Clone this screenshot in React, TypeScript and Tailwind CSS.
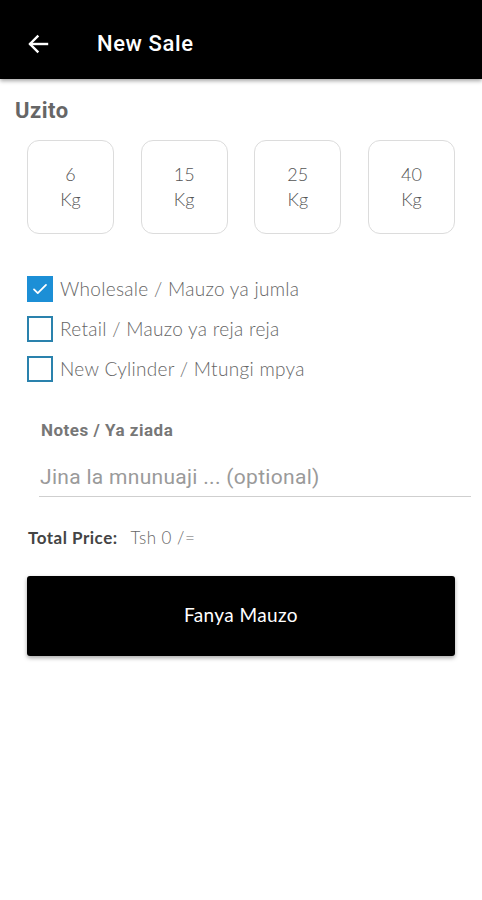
import { useState } from "react"

const weights = ["6", "15", "25", "40"]

const options = [
  { id: 1, label: "Wholesale / Mauzo ya jumla", checked: true },
  { id: 2, label: "Retail / Mauzo ya reja reja", checked: false },
  { id: 3, label: "New Cylinder / Mtungi mpya", checked: false },
]

export default function App() {
  const [checks, setChecks] = useState(options.map((o) => o.checked))

  return (
    <div className="w-[482px] h-[900px] bg-white font-['Roboto',sans-serif]">
      <div className="h-[79px] pt-[8px] bg-black flex items-center shadow-[0_2px_4px_rgba(0,0,0,0.35)] relative">
        <svg className="ml-[26px] w-6 h-6" viewBox="0 0 24 24" fill="none" stroke="white" strokeWidth="2.4" strokeLinecap="square">
          <path d="M21 12H4.5" />
          <path d="M11.5 4.5L4 12l7.5 7.5" />
        </svg>
        <span className="ml-[47px] text-white text-[22px] font-medium tracking-[0.6px]">New Sale</span>
      </div>

      <p className="mt-[20px] ml-[15px] text-[22px] font-bold text-[#666] leading-6 tracking-[0.5px]">Uzito</p>

      <div className="mt-[17px] px-[27px] flex justify-between">
        {weights.map((w) => (
          <button
            key={w}
            className="w-[87px] h-[94px] rounded-[12px] border border-[#dcdcdc] flex flex-col items-center justify-center text-[#555] text-[18px] leading-[25px] font-['Lato',sans-serif] font-light"
          >
            <span>{w}</span>
            <span>Kg</span>
          </button>
        ))}
      </div>

      <div className="mt-[42px] ml-[27px] flex flex-col gap-[14px]">
        {options.map((o, i) => (
          <label key={o.id} className="flex items-center gap-[7px] h-[26px] cursor-pointer">
            <span
              onClick={() => setChecks(checks.map((c, j) => (j === i ? !c : c)))}
              className={
                checks[i]
                  ? "w-[26px] h-[26px] bg-[#1c8fd6] flex items-center justify-center"
                  : "w-[26px] h-[26px] border-2 border-[#2a82ad]"
              }
            >
              {checks[i] && (
                <svg className="w-[18px] h-[18px]" viewBox="0 0 24 24" fill="none" stroke="white" strokeWidth="2.4" strokeLinecap="round" strokeLinejoin="round">
                  <path d="M4 12.5l5 5L20 6.5" />
                </svg>
              )}
            </span>
            <span className="text-[19px] tracking-[0.3px] text-[#666] font-['Lato',sans-serif] font-light">{o.label}</span>
          </label>
        ))}
      </div>

      <div className="mt-[38px] ml-[39px] mr-[11px]">
        <p className="ml-[2px] text-[17px] font-bold text-[#777] leading-5 tracking-[0.5px]">Notes / Ya ziada</p>
        <div className="mt-[25px] border-b border-[#cfcfcf] pb-[5px]">
          <input
            className="w-full text-[21px] tracking-[0.3px] text-[#333] placeholder:text-[#9a9a9a] outline-none leading-6 pl-[1px]"
            placeholder="Jina la mnunuaji ... (optional)"
          />
        </div>
      </div>

      <div className="mt-[28px] ml-[28px] flex items-center gap-[13px] font-['Lato',sans-serif]">
        <span className="text-[17px] tracking-[0.5px] font-bold text-[#444]">Total Price:</span>
        <span className="text-[17px] tracking-[0.5px] text-[#666] font-light">Tsh 0 /=</span>
      </div>

      <div className="mt-[25px] px-[27px]">
        <button className="w-full h-[80px] bg-black rounded-[3px] shadow-[0_2px_4px_rgba(0,0,0,0.35)] text-white text-[19px] tracking-[0.4px] font-['Lato',sans-serif]">
          Fanya Mauzo
        </button>
      </div>
    </div>
  )
}
